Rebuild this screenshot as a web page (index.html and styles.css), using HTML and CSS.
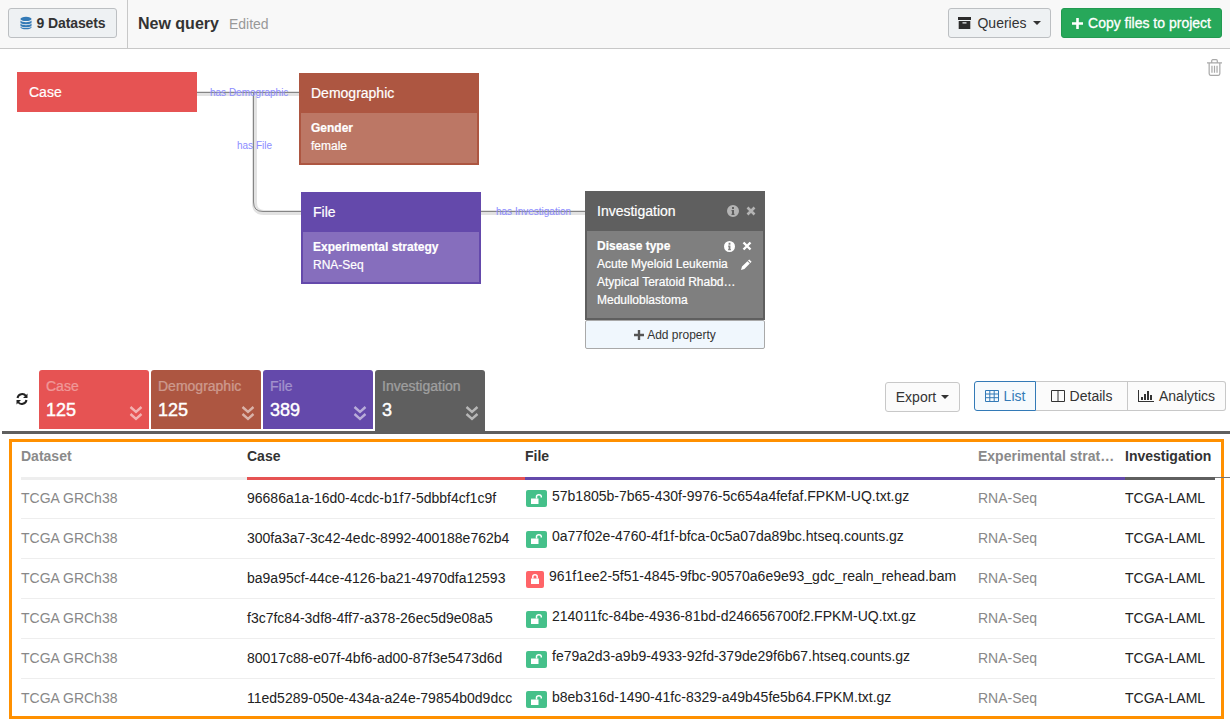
FILE: index.html
```html
<!DOCTYPE html>
<html lang="en">
<head>
<meta charset="utf-8">
<title>New query</title>
<link rel="stylesheet" href="styles.css">
</head>
<body>
<header class="topbar">
  <div class="topbar-left">
    <button class="btn btn-datasets">
      <svg class="icon" width="12" height="14" viewBox="0 0 14 15"><g fill="#337ab7"><ellipse cx="7" cy="2.8" rx="6.5" ry="2.5"/><path d="M.5 4.600C1.500 6 4 6.600 7 6.600s5.500-.6 6.500-2v2.300C13.500 8.300 10.500 9 7 9S.5 8.300.5 6.900z"/><path d="M.5 8.200C1.500 9.600 4 10.200 7 10.200s5.500-.6 6.500-2v2.300c0 1.400-3 2.100-6.500 2.100S.5 11.900.5 10.500z"/><path d="M.5 11.500C1.500 12.800 4 13.300 7 13.300s5.500-.5 6.500-1.800v.9c0 1.400-3 2.400-6.500 2.400S.5 13.800.5 12.400z"/></g></svg>
      <span>9 Datasets</span>
    </button>
  </div>
  <div class="query-title">
    <strong>New query</strong>
    <span class="edited">Edited</span>
  </div>
  <div class="topbar-right">
    <button class="btn btn-queries">
      <svg class="icon" width="13" height="12" viewBox="0 0 13 12"><path fill="#2b2b2b" d="M0 0h13v3H0zM.7 4h11.600v8H.7zM4.500 5.300v1.200h4V5.300z" fill-rule="evenodd"/></svg>
      <span>Queries</span><i class="caret"></i>
    </button>
    <button class="btn btn-copy">
      <svg class="icon" width="11" height="11" viewBox="0 0 11 11"><path fill="#fff" d="M4.200 0h2.600v4.200H11v2.600H6.800V11H4.200V6.800H0V4.200h4.200z"/></svg>
      <span>Copy files to project</span>
    </button>
  </div>
</header>

<section class="canvas">
  <svg class="edges" width="1230" height="321" viewBox="0 0 1230 321">
    <g fill="none" stroke="#e2e2e2" stroke-width="5">
      <path d="M197 44.500H299"/>
      <path d="M254.500 44V154Q254.500 163.500 264 163.500H301"/>
      <path d="M481 163.500H585"/>
    </g>
    <g fill="none" stroke="#858585" stroke-width="1">
      <path d="M197 43.500H299"/>
      <path d="M253.500 43.500V153Q253.500 162.500 263 162.500H301"/>
      <path d="M481 162.500H585"/>
    </g>
  </svg>
  <span class="edge-label label-demo">has Demographic</span>
  <span class="edge-label label-file">has File</span>
  <span class="edge-label label-inv">has Investigation</span>

  <div class="node node-case"><div class="node-head">Case</div></div>

  <div class="node node-demo">
    <div class="node-head">Demographic</div>
    <div class="node-body">
      <div class="prop-name">Gender</div>
      <div class="prop-val">female</div>
    </div>
  </div>

  <div class="node node-file">
    <div class="node-head">File</div>
    <div class="node-body">
      <div class="prop-name">Experimental strategy</div>
      <div class="prop-val">RNA-Seq</div>
    </div>
  </div>

  <div class="node node-inv">
    <div class="node-head">
      <span>Investigation</span>
      <span class="head-icons">
        <svg width="12" height="12" viewBox="0 0 12 12"><path fill="#b4b4b4" fill-rule="evenodd" d="M6 0a6 6 0 1 1 0 12A6 6 0 0 1 6 0zM5 2v2h2V2zM4.500 5v1.200H5v2.600h-.5V10h3V8.800H7V5z"/></svg>
        <svg width="10" height="10" viewBox="0 0 10 10"><path stroke="#b4b4b4" stroke-width="2.600" d="M1.500 1.500l7 7M8.500 1.500l-7 7"/></svg>
      </span>
    </div>
    <div class="node-body">
      <div class="prop-row">
        <div class="prop-name">Disease type</div>
        <span class="prop-icons">
          <svg width="11" height="11" viewBox="0 0 12 12"><path fill="#fff" fill-rule="evenodd" d="M6 0a6 6 0 1 1 0 12A6 6 0 0 1 6 0zM5 2v2h2V2zM4.500 5v1.200H5v2.600h-.5V10h3V8.800H7V5z"/></svg>
          <svg width="10" height="10" viewBox="0 0 10 10"><path stroke="#fff" stroke-width="2.400" d="M1.500 1.500l7 7M8.500 1.500l-7 7"/></svg>
        </span>
      </div>
      <div class="prop-row">
        <div class="prop-val">Acute Myeloid Leukemia</div>
        <svg class="pencil" width="11" height="11" viewBox="0 0 11 11"><path fill="#fff" d="M8.200.4l2.400 2.400-1.200 1.200L7 1.600zM6.400 2.200l2.400 2.400-5.400 5.400L0 11l1-3.400z"/></svg>
      </div>
      <div class="prop-val prop-trunc">Atypical Teratoid Rhabd…</div>
      <div class="prop-val">Medulloblastoma</div>
    </div>
    <button class="add-prop">
      <svg width="10" height="10" viewBox="0 0 11 11"><path fill="#555" d="M4.200 0h2.600v4.200H11v2.600H6.800V11H4.200V6.800H0V4.200h4.200z"/></svg>
      <span>Add property</span>
    </button>
  </div>

  <svg class="trash" width="15" height="17" viewBox="0 0 16 18"><g fill="none" stroke="#a9a9a9" stroke-width="1.300"><path d="M0 4h16M2.300 4v11.500c0 1 .6 1.800 1.500 1.800h8.400c.9 0 1.500-.8 1.500-1.800V4M5 4V2c0-.8.500-1.300 1.200-1.300h3.600c.7 0 1.200.5 1.200 1.300v2M5.300 7v7.500M8 7v7.500M10.700 7v7.500"/></g></svg>
</section>

<section class="toolbar">
  <svg class="refresh" width="12" height="12" viewBox="0 0 24 24"><g fill="none" stroke="#222" stroke-width="4"><path d="M3 10a9.500 9.500 0 0 1 17-4"/><path d="M21 14a9.500 9.500 0 0 1-17 4"/></g><path fill="#222" d="M23 1v9h-9zM1 23v-9h9z"/></svg>
  <div class="tabs">
    <div class="tab tab-case"><div class="tab-name">Case</div><div class="tab-count">125</div><svg class="chev" width="14" height="16" viewBox="0 0 14 16"><path fill="none" stroke="currentColor" stroke-width="2.400" d="M1.500 2l5.500 5 5.500-5M1.500 9l5.500 5 5.500-5"/></svg></div>
    <div class="tab tab-demo"><div class="tab-name">Demographic</div><div class="tab-count">125</div><svg class="chev" width="14" height="16" viewBox="0 0 14 16"><path fill="none" stroke="currentColor" stroke-width="2.400" d="M1.500 2l5.500 5 5.500-5M1.500 9l5.500 5 5.500-5"/></svg></div>
    <div class="tab tab-file"><div class="tab-name">File</div><div class="tab-count">389</div><svg class="chev" width="14" height="16" viewBox="0 0 14 16"><path fill="none" stroke="currentColor" stroke-width="2.400" d="M1.500 2l5.500 5 5.500-5M1.500 9l5.500 5 5.500-5"/></svg></div>
    <div class="tab tab-inv"><div class="tab-name">Investigation</div><div class="tab-count">3</div><svg class="chev" width="14" height="16" viewBox="0 0 14 16"><path fill="none" stroke="currentColor" stroke-width="2.400" d="M1.500 2l5.500 5 5.500-5M1.500 9l5.500 5 5.500-5"/></svg></div>
  </div>
  <div class="view-controls">
    <button class="btn btn-export"><span>Export</span><i class="caret"></i></button>
    <div class="btn-group">
      <button class="seg seg-list active">
        <svg width="14" height="12" viewBox="0 0 14 12"><path fill="none" stroke="#337ab7" d="M.5.500h13v11H.500zM.5 4h13M.5 7.700h13M4.800.5v11M9.200.5v11"/></svg>
        <span>List</span>
      </button>
      <button class="seg seg-details">
        <svg width="14" height="12" viewBox="0 0 14 12"><path fill="none" stroke="#333" d="M.5.500h13v11H.500zM7 .5v11"/></svg>
        <span>Details</span>
      </button>
      <button class="seg seg-analytics">
        <svg width="16" height="12" viewBox="0 0 16 12"><path fill="#333" d="M0 0h1v11h15v1H0zM3 7h2v3H3zM6 4h2v6H6zM9 1h2v9H9zM12 5h2v5h-2z"/></svg>
        <span>Analytics</span>
      </button>
    </div>
  </div>
</section>
<div class="tab-rule"></div>

<section class="results">
  <table class="grid">
    <colgroup><col class="c1"><col class="c2"><col class="c3"><col class="c4"><col class="c5"></colgroup>
    <thead>
      <tr>
        <th class="th-muted">Dataset</th>
        <th class="th-case">Case</th>
        <th class="th-file">File</th>
        <th class="th-muted th-exp">Experimental strat…</th>
        <th class="th-inv">Investigation</th>
      </tr>
    </thead>
    <tbody>
      <tr><td class="muted">TCGA GRCh38</td><td>96686a1a-16d0-4cdc-b1f7-5dbbf4cf1c9f</td><td><span class="badge open"><svg width="11" height="10" viewBox="0 0 11 10"><path fill="#fff" d="M0 4.500h7.500V10H0z"/><path fill="none" stroke="#fff" stroke-width="1.500" d="M5.500 4.500V2.600C5.500 1.400 6.500.8 7.900.8s2.400.6 2.400 1.800v1"/></svg></span>57b1805b-7b65-430f-9976-5c654a4fefaf.FPKM-UQ.txt.gz</td><td class="muted">RNA-Seq</td><td>TCGA-LAML</td></tr>
      <tr><td class="muted">TCGA GRCh38</td><td>300fa3a7-3c42-4edc-8992-400188e762b4</td><td><span class="badge open"><svg width="11" height="10" viewBox="0 0 11 10"><path fill="#fff" d="M0 4.500h7.500V10H0z"/><path fill="none" stroke="#fff" stroke-width="1.500" d="M5.500 4.500V2.600C5.500 1.400 6.500.8 7.900.8s2.400.6 2.400 1.800v1"/></svg></span>0a77f02e-4760-4f1f-bfca-0c5a07da89bc.htseq.counts.gz</td><td class="muted">RNA-Seq</td><td>TCGA-LAML</td></tr>
      <tr><td class="muted">TCGA GRCh38</td><td>ba9a95cf-44ce-4126-ba21-4970dfa12593</td><td><span class="badge closed"><svg width="8" height="10" viewBox="0 0 8 10"><path fill="#fff" d="M0 4.500h8V10H0z"/><path fill="none" stroke="#fff" stroke-width="1.500" d="M1.800 4.500V2.800C1.800 1.500 2.700.8 4 .8s2.200.7 2.200 2v1.700"/></svg></span>961f1ee2-5f51-4845-9fbc-90570a6e9e93_gdc_realn_rehead.bam</td><td class="muted">RNA-Seq</td><td>TCGA-LAML</td></tr>
      <tr><td class="muted">TCGA GRCh38</td><td>f3c7fc84-3df8-4ff7-a378-26ec5d9e08a5</td><td><span class="badge open"><svg width="11" height="10" viewBox="0 0 11 10"><path fill="#fff" d="M0 4.500h7.500V10H0z"/><path fill="none" stroke="#fff" stroke-width="1.500" d="M5.500 4.500V2.600C5.500 1.400 6.500.8 7.900.8s2.400.6 2.400 1.800v1"/></svg></span>214011fc-84be-4936-81bd-d246656700f2.FPKM-UQ.txt.gz</td><td class="muted">RNA-Seq</td><td>TCGA-LAML</td></tr>
      <tr><td class="muted">TCGA GRCh38</td><td>80017c88-e07f-4bf6-ad00-87f3e5473d6d</td><td><span class="badge open"><svg width="11" height="10" viewBox="0 0 11 10"><path fill="#fff" d="M0 4.500h7.500V10H0z"/><path fill="none" stroke="#fff" stroke-width="1.500" d="M5.500 4.500V2.600C5.500 1.400 6.500.8 7.900.8s2.400.6 2.400 1.800v1"/></svg></span>fe79a2d3-a9b9-4933-92fd-379de29f6b67.htseq.counts.gz</td><td class="muted">RNA-Seq</td><td>TCGA-LAML</td></tr>
      <tr><td class="muted">TCGA GRCh38</td><td>11ed5289-050e-434a-a24e-79854b0d9dcc</td><td><span class="badge open"><svg width="11" height="10" viewBox="0 0 11 10"><path fill="#fff" d="M0 4.500h7.500V10H0z"/><path fill="none" stroke="#fff" stroke-width="1.500" d="M5.500 4.500V2.600C5.500 1.400 6.500.8 7.900.8s2.400.6 2.400 1.800v1"/></svg></span>b8eb316d-1490-41fc-8329-a49b45fe5b64.FPKM.txt.gz</td><td class="muted">RNA-Seq</td><td>TCGA-LAML</td></tr>
    </tbody>
  </table>
</section>
</body>
</html>
```

FILE: styles.css
```css
* { box-sizing: border-box; }
html, body { margin: 0; padding: 0; }
body {
  width: 1230px;
  height: 720px;
  overflow: hidden;
  background: #fff;
  color: #333;
  font-family: "Liberation Sans", Arial, sans-serif;
  font-size: 14px;
}
button { font-family: inherit; font-size: 14px; margin: 0; }

/* top bar */
.topbar {
  height: 49px;
  display: flex;
  align-items: stretch;
  background: #f8f8f8;
  border-bottom: 1px solid #c8c8c8;
}
.topbar-left {
  width: 128px;
  padding: 8px 0 0 8px;
  border-right: 1px solid #c8c8c8;
}
.btn {
  display: inline-flex;
  align-items: center;
  justify-content: center;
  height: 30px;
  padding: 0;
  border: 1px solid #bcbfc2;
  border-radius: 3px;
  background: #eef1f3;
  color: #333;
}
.btn-datasets { width: 109px; gap: 5px; font-weight: 700; letter-spacing: -.12px; }
.query-title {
  flex: 1;
  display: flex;
  align-items: center;
  gap: 10px;
  padding-left: 10px;
  padding-bottom: 1px;
}
.query-title strong { font-size: 16px; color: #333; }
.edited { color: #999; }
.topbar-right {
  display: flex;
  gap: 10px;
  padding: 8px 8px 0 0;
}
.btn-queries { width: 103px; gap: 6px; }
.btn-copy {
  width: 161px;
  gap: 5px;
  background: #27a85a;
  border-color: #229a51;
  color: #fff;
  -webkit-text-stroke: .3px #fff;
}
.caret {
  display: inline-block;
  width: 0;
  height: 0;
  border-left: 4px solid transparent;
  border-right: 4px solid transparent;
  border-top: 4px solid #333;
}

/* diagram canvas */
.canvas {
  position: relative;
  height: 321px;
}
.edges { position: absolute; left: 0; top: 0; }
.edge-label {
  position: absolute;
  font-size: 10px;
  line-height: 12px;
  color: #8c8cff;
  white-space: nowrap;
}
.label-demo { left: 210px; top: 38px; }
.label-file { left: 237px; top: 91px; }
.label-inv { left: 496px; top: 157px; }
.node {
  position: absolute;
  width: 180px;
  color: #fff;
  -webkit-text-stroke: .2px #fff;
}
.node-head {
  height: 40px;
  padding: 0 12px;
  display: flex;
  align-items: center;
  justify-content: space-between;
  font-size: 14px;
}
.node-body {
  border: 2px solid;
  border-top: 0;
  padding: 6px 10px 0;
  font-size: 12px;
  line-height: 18px;
}
.prop-name { font-weight: 700; }
.node-case { left: 17px; top: 23px; background: #e65353; }
.node-demo { left: 299px; top: 24px; background: #ad5641; }
.node-demo .node-body { height: 52px; background: #bc7765; border-color: #ad5641; }
.node-file { left: 301px; top: 143px; background: #6449ab; }
.node-file .node-body { height: 52px; background: #866ebd; border-color: #6449ab; }
.node-inv { left: 585px; top: 142px; }
.node-inv .node-head { background: #5f5f5f; }
.node-inv .node-body { height: 89px; background: #7f7f7f; border-color: #5f5f5f; padding-right: 6px; }
.head-icons { display: flex; align-items: center; gap: 7px; margin-right: -3px; }
.prop-row { display: flex; align-items: center; justify-content: space-between; }
.prop-icons { display: flex; align-items: center; gap: 7px; margin-right: 5px; }
.pencil { margin-right: 5px; }
.add-prop {
  width: 100%;
  height: 29px;
  display: flex;
  align-items: center;
  justify-content: center;
  gap: 3px;
  padding: 0;
  background: #f0f7fd;
  border: 1px solid #a9a9a9;
  border-radius: 2px;
  color: #333;
  font-size: 12px;
  -webkit-text-stroke: 0;
}
.trash { position: absolute; left: 1207px; top: 10px; }

/* tabs and view controls */
.toolbar {
  height: 61px;
  display: flex;
  align-items: flex-start;
  position: relative;
}
.refresh { margin: 23px 11px 0 16px; flex: none; }
.tabs { display: flex; gap: 2px; }
.tab {
  position: relative;
  width: 110px;
  height: 59px;
  padding: 8px 6px 0 7px;
  border-radius: 3px 3px 0 0;
  color: #fff;
}
.tab-name { font-size: 14px; line-height: 16px; opacity: .4; -webkit-text-stroke: .2px #fff; }
.tab-count { margin-top: 4px; font-size: 18px; line-height: 24px; -webkit-text-stroke: .45px #fff; }
.chev { position: absolute; right: 6px; bottom: 8px; opacity: .55; }
.tab-case { background: #e65353; }
.tab-demo { background: #ad5641; }
.tab-file { background: #6449ab; }
.tab-inv { background: #5f5f5f; height: 61px; }
.tab-inv .chev { bottom: 10px; }
.view-controls {
  margin-left: auto;
  padding: 11px 4px 0 0;
  display: flex;
  gap: 14px;
}
.btn-export {
  width: 75px;
  gap: 5px;
  margin-top: 1px;
  background: #fbfbfb;
  border-color: #c8c8c8;
}
.btn-group { display: flex; height: 30px; }
.seg {
  height: 30px;
  display: flex;
  align-items: center;
  justify-content: center;
  gap: 5px;
  padding: 0;
  background: #fbfbfb;
  border: 1px solid #c8c8c8;
  border-left: 0;
  color: #333;
}
.seg-list { width: 62px; }
.seg-details { width: 92px; }
.seg-analytics { width: 98px; border-radius: 0 3px 3px 0; }
.seg.active {
  border: 1px solid #337ab7;
  border-radius: 3px 0 0 3px;
  background: #f6fafd;
  color: #337ab7;
}
.tab-rule {
  height: 3px;
  margin-left: 2px;
  background: #5f5f5f;
}

/* results table */
.results {
  position: relative;
  width: 1215px;
  height: 280px;
  margin: 5px 0 0 9px;
  padding: 0 0 0 9px;
  border: 3px solid #ff9000;
}
.results::after {
  content: "";
  position: absolute;
  left: 1203px;
  top: 35px;
  width: 15px;
  height: 1px;
  background: #777;
}
.grid {
  width: 1194px;
  table-layout: fixed;
  border-collapse: collapse;
}
.c1 { width: 226px; }
.c2 { width: 278px; }
.c3 { width: 453px; }
.c4 { width: 147px; }
.c5 { width: 90px; }
th {
  height: 36px;
  padding: 0;
  border-bottom: 3px solid #eee;
  text-align: left;
  font-size: 14px;
  font-weight: 700;
  color: #333;
  white-space: nowrap;
  vertical-align: top;
  line-height: 28px;
}
.th-muted { color: #8a8a8a; }
.th-case { border-bottom-color: #e65353; }
.th-file, .th-exp { border-bottom-color: #6449ab; }
.th-inv { border-bottom-color: #5f5f5f; }
td {
  height: 40px;
  padding: 0;
  border-bottom: 1px solid #eee;
  white-space: nowrap;
  font-size: 14px;
  color: #222;
}
tbody tr:first-child td { padding-bottom: 2px; }
tbody tr:last-child td { border-bottom: 0; }
td.muted { color: #888; }
.badge {
  display: inline-flex;
  align-items: center;
  justify-content: center;
  width: 21px;
  height: 17px;
  margin: 0 5px 0 1px;
  border-radius: 2px;
  vertical-align: -3px;
}
.badge.closed { width: 18px; }
.open { background: #45c08a; }
.closed { background: #ff6468; }
```
